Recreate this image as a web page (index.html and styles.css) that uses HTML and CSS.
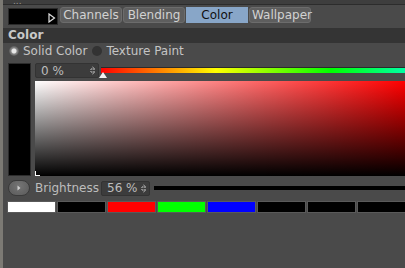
FILE: index.html
```html
<!DOCTYPE html>
<html>
<head>
<meta charset="utf-8">
<link rel="stylesheet" href="styles.css">
</head>
<body>
<div class="page">
  <div class="titlestrip"><span class="title-dots">...</span></div>
  <div class="topbar">
    <div class="current-swatch"><svg class="swatch-arrow" width="8" height="10" viewBox="0 0 8 10"><path d="M1 1 L6.5 5 L1 9 Z" fill="none" stroke="#e0e0e0" stroke-width="1.2"/></svg></div>
    <div class="tabs">
      <div class="tab">Channels</div>
      <div class="tab">Blending</div>
      <div class="tab active">Color</div>
      <div class="tab">Wallpaper</div>
    </div>
  </div>
  <div class="section-header">Color</div>
  <div class="radio-row">
    <span class="radio on"></span><span class="radio-label">Solid Color</span>
    <span class="radio off"></span><span class="radio-label">Texture Paint</span>
  </div>
  <div class="picker">
    <div class="preview-bar"></div>
    <div class="picker-main">
      <div class="hue-row">
        <div class="spin spin-hue"><span>0 %</span><span class="spin-arrows"></span></div>
        <div class="hue-track">
          <div class="hue-bar"></div>
          <div class="hue-marker"></div>
        </div>
      </div>
      <div class="sv-field"><div class="sv-corner"></div></div>
    </div>
  </div>
  <div class="bright-row">
    <div class="round-btn"><svg width="6" height="8" viewBox="0 0 6 8"><path d="M1.5 1.5 L4.5 4 L1.5 6.5 Z" fill="#cfcfcf"/></svg></div>
    <span class="bright-label">Brightness</span>
    <div class="spin spin-bright"><span>56 %</span><span class="spin-arrows"></span></div>
    <div class="bright-track"></div>
  </div>
  <div class="swatches">
    <div class="sw" style="background:#ffffff"></div>
    <div class="sw" style="background:#000000"></div>
    <div class="sw" style="background:#ff0000"></div>
    <div class="sw" style="background:#00ff00"></div>
    <div class="sw" style="background:#0000ff"></div>
    <div class="sw" style="background:#000000"></div>
    <div class="sw" style="background:#000000"></div>
    <div class="sw" style="background:#000000"></div>
  </div>
</div>
</body>
</html>
```

FILE: styles.css
```css
html, body {
  margin: 0;
  padding: 0;
  background: #4a4a4a;
  overflow: hidden;
}
.page {
  width: 405px;
  height: 268px;
  box-sizing: border-box;
  border-left: 3px solid #7c7a74;
  font-family: "DejaVu Sans", "Liberation Sans", sans-serif;
  color: #c4c4c4;
  overflow: hidden;
}
.titlestrip {
  height: 4px;
  background: #3e3e3e;
  border-bottom: 1px solid #2c2c2c;
  overflow: hidden;
  font-size: 9px;
  line-height: 2px;
  color: #999;
  padding-left: 10px;
}
.topbar {
  display: flex;
  align-items: flex-start;
  height: 21px;
  padding-left: 5px;
  padding-top: 2px;
  box-sizing: border-box;
}
.current-swatch {
  width: 50px;
  height: 17px;
  margin-top: 1px;
  background: #000;
  position: relative;
  box-sizing: border-box;
  border: 1px solid #2a2a2a;
}
.swatch-arrow {
  position: absolute;
  right: 1px;
  bottom: 1px;
}
.tabs {
  display: flex;
  margin-left: 2px;
  gap: 1px;
}
.tab {
  width: 62px;
  height: 16px;
  line-height: 15px;
  box-sizing: border-box;
  padding: 0 2px;
  background: #5e5e5e;
  border: 1px solid #6c6c6c;
  border-radius: 3px;
  font-size: 12px;
  color: #d2d2d2;
  text-align: center;
}
.tab.active {
  background: #88a6c8;
  border-color: #88a6c8;
  border-radius: 0;
  color: #101010;
}
.section-header {
  margin-top: 2px;
  height: 15px;
  background: #343434;
  font-weight: bold;
  font-size: 12px;
  line-height: 15px;
  padding-left: 5px;
  color: #c8c8c8;
}
.radio-row {
  display: flex;
  align-items: center;
  height: 16px;
  padding-left: 6px;
  font-size: 12px;
}
.radio {
  width: 10px;
  height: 10px;
  border-radius: 50%;
  box-sizing: border-box;
  margin-right: 4px;
}
.radio.on {
  background: radial-gradient(circle, #e8e8e8 0 2px, #8a8a8a 3px, #5a5a5a 5px);
}
.radio.off {
  background: #333;
  margin-left: 5px;
}
.radio-label {
  color: #c4c4c4;
}
.picker {
  display: flex;
  margin-top: 4px;
  padding-left: 5px;
  gap: 4px;
}
.preview-bar {
  width: 23px;
  height: 113px;
  background: #000;
  box-sizing: border-box;
  border: 1px solid #2c2c2c;
}
.picker-main {
  flex: 1;
  display: flex;
  flex-direction: column;
  gap: 3px;
}
.hue-row {
  display: flex;
  align-items: flex-start;
  height: 15px;
}
.spin {
  display: flex;
  justify-content: space-between;
  align-items: center;
  box-sizing: border-box;
  height: 15px;
  background: #3c3c3c;
  border: 1px solid #333;
  border-radius: 2px;
  font-size: 12px;
  color: #bdbdbd;
  padding: 0 3px 0 5px;
}
.spin-hue { width: 64px; }
.spin-bright { width: 49px; }
.spin-arrows {
  width: 5px;
  height: 9px;
  background:
    linear-gradient(to bottom right, transparent 50%, #888 50%) 0 0 / 2.5px 4px no-repeat,
    linear-gradient(to bottom left, transparent 50%, #888 50%) 2.5px 0 / 2.5px 4px no-repeat,
    linear-gradient(to top right, transparent 50%, #888 50%) 0 5px / 2.5px 4px no-repeat,
    linear-gradient(to top left, transparent 50%, #888 50%) 2.5px 5px / 2.5px 4px no-repeat;
}
.hue-track {
  flex: 1;
  position: relative;
  height: 15px;
  margin-left: 2px;
}
.hue-bar {
  margin-top: 4px;
  height: 6px;
  box-sizing: border-box;
  border-top: 1px solid #2a2a2a;
  background: linear-gradient(to right, #ff0000 0px, #ffff00 115px, #00ff00 230px, #00ffff 345px, #0000ff 460px);
}
.hue-marker {
  position: absolute;
  left: -2px;
  top: 9px;
  width: 0;
  height: 0;
  border-left: 4px solid transparent;
  border-right: 4px solid transparent;
  border-bottom: 6px solid #f2f2f2;
}
.sv-field {
  position: relative;
  height: 95px;
  background:
    linear-gradient(to top, #000, rgba(0,0,0,0)),
    linear-gradient(to right, #fff, #ff0000);
}
.sv-corner {
  position: absolute;
  left: 0;
  bottom: 0;
  width: 4px;
  height: 4px;
  border-left: 1px solid #fff;
  border-bottom: 1px solid #fff;
}
.bright-row {
  display: flex;
  align-items: center;
  height: 18px;
  margin-top: 3px;
  padding-left: 5px;
  font-size: 12px;
}
.round-btn {
  width: 22px;
  height: 16px;
  border-radius: 8px;
  background: radial-gradient(ellipse at 50% 35%, #757575, #5a5a5a);
  border: 1px solid #3a3a3a;
  box-sizing: border-box;
  display: flex;
  align-items: center;
  justify-content: center;
}
.bright-label {
  margin-left: 5px;
  width: 66px;
  color: #bdbdbd;
}
.bright-track {
  flex: 1;
  height: 4px;
  background: #000;
  margin-left: 4px;
}
.swatches {
  display: flex;
  margin-top: 4px;
  padding-left: 4px;
  gap: 1px;
}
.sw {
  flex: 0 0 49px;
  height: 12px;
  box-sizing: border-box;
  border: 1px solid #5a5a5a;
}
```
